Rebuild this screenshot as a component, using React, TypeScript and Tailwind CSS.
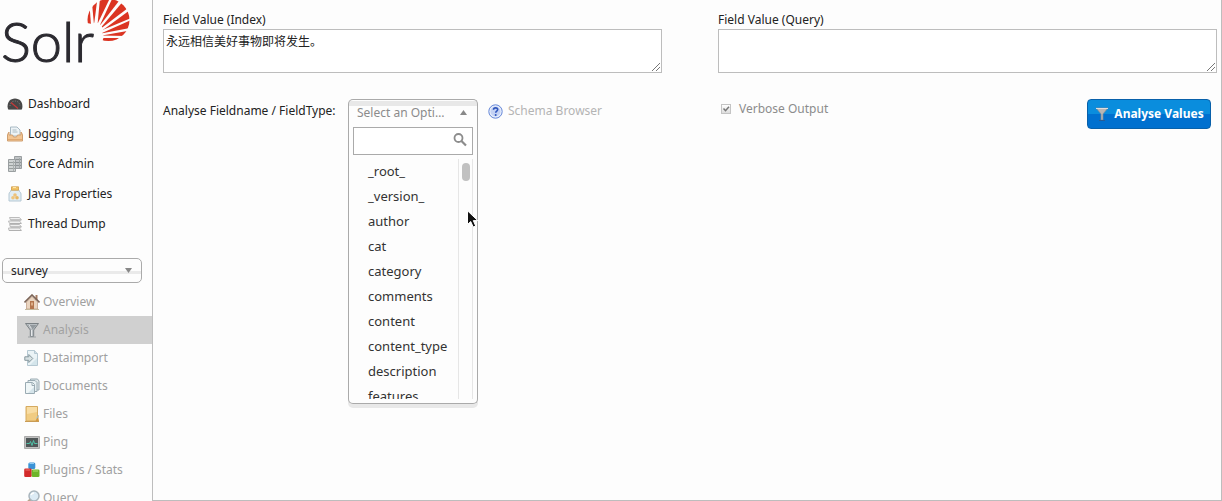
import React from "react";

type IconProps = { children: React.ReactNode };

function Icon({ children }: IconProps) {
  return (
    <svg className="size-4 shrink-0" viewBox="0 0 16 16" fill="none" aria-hidden="true">
      {children}
    </svg>
  );
}

const DashboardIcon = () => (
  <Icon>
    <path d="M1 13C-.5 8 2 2.500 8 2.500S16.500 8 15 13Q14.500 14 13 14H3Q1.500 14 1 13Z" fill="#474747" />
    <path d="M3 10a5 5 0 0 1 10 0" stroke="#8a8a8a" strokeDasharray="1 1.500" />
    <path d="M4 6.500l7 6" stroke="#c83a3a" strokeWidth="1.200" />
    <path d="M2 13.500h12" stroke="#8d8d8d" />
  </Icon>
);
const LoggingIcon = () => (
  <Icon>
    <path d="M3.500 1h6.500l3 3v6H3.500z" fill="#edf3f6" stroke="#a9bac4" />
    <path d="M5.500 4h4M5.500 6h5" stroke="#a9bac4" />
    <path d="M.5 8.500L2 6v3h3.500l1 2h3l1-2H14V6l1.500 2.500v6.500H.5z" fill="#f3c592" stroke="#cf9f70" />
    <path d="M1 13.500h14" stroke="#e0a870" />
  </Icon>
);
const CoreIcon = () => (
  <Icon>
    <path d="M7.500.5h7v12h-7z" fill="#bfc3c5" stroke="#9a9fa1" />
    <path d="M8 3.500h6M8 6.500h6M8 9.500h6" stroke="#8e9496" />
    <path d="M1.500 3.500h7v12h-7z" fill="#d0d4d4" stroke="#9a9fa1" />
    <path d="M2 6.500h6M2 9.500h6M2 12.500h6" stroke="#989e9d" />
    <path d="M6.500 5v10" stroke="#abb0b0" />
    <path d="M12.500 2v10" stroke="#a1a7a7" />
  </Icon>
);
const JavaIcon = () => (
  <Icon>
    <path d="M4 4h8c0 2 2 2 2 4v7H2V8c0-2 2-2 2-4z" fill="#e2edf3" stroke="#b5c8d4" />
    <path d="M4.500.8h7v3.400h-7z" fill="#f3c467" stroke="#cf9d48" strokeWidth=".8" />
    <path d="M6 1.500h3" stroke="#ffe7a6" />
    <circle cx="8" cy="9" r="1.800" fill="#edc27a" />
    <circle cx="6" cy="11.800" r="1.800" fill="#f0c47a" />
    <circle cx="10" cy="11.800" r="1.800" fill="#e8b662" />
  </Icon>
);
const ThreadIcon = () => (
  <Icon>
    <path d="M2.500 1.500h10l2 2.500H3.500zM1.500 5h11l2 2.500H2.500zM2.500 8.500h10l2 2.500H3.500zM1.500 12h11l2 2.500H2z" fill="#f0f0f0" stroke="#bcbcbc" />
    <path d="M3.500 4h10.500M3 7.500h11M3.500 11h10.500M2 14.500h12" stroke="#b0b0b0" />
  </Icon>
);
const HomeIcon = () => (
  <Icon>
    <path d="M2.500 8L8 2.500 13.500 8v7h-11z" fill="#ead5c0" stroke="#bc9a80" strokeWidth=".7" />
    <path d="M11.500 1h2v5h-2z" fill="#a77c62" />
    <path d="M.5 8.500L8 1l7.500 7.500" stroke="#7c6558" strokeWidth="1.600" />
    <path d="M6 7h4v8H6z" fill="#b4764d" />
    <path d="M7.200 8.500h1.600v3H7.200z" fill="#e9bf98" />
    <path d="M1 15.500h14" stroke="#c5ba9e" />
  </Icon>
);
const FunnelIcon = () => (
  <Icon>
    <path d="M1.500 1.500h13L9.700 8v6.500H6.300V8z" fill="#b8bec2" stroke="#7b8185" />
    <path d="M3.500 3h9L8.500 7.500z" fill="#92999e" />
    <path d="M7.500 8v6M5 3l2.500 3.500" stroke="#e6e8ea" />
    <path d="M4 15h8" stroke="#9ca1a4" />
  </Icon>
);
const ImportIcon = () => (
  <Icon>
    <path d="M3.500.5h7l3 3v12h-10z" fill="#eaf3f6" stroke="#b5c8d2" />
    <path d="M10.500.5v3h3" fill="#cfdee5" stroke="#b5c8d2" />
    <path d="M6 15l7-7v7z" fill="#d4e5eb" />
    <path d="M.8 6.800h4V4.500l4 4-4 4v-2.200h-4z" fill="#d7e1e3" stroke="#87989e" />
  </Icon>
);
const DocsIcon = () => (
  <Icon>
    <path d="M6.500 1h7l1.500 2v9H6.500z" fill="#dfe8ea" stroke="#9aabb3" />
    <path d="M4 2.500h7l2 2v9H4z" fill="#e7f0f2" stroke="#9aabb3" />
    <path d="M1.500 4.500h7l2 2v9h-9z" fill="#eff6f7" stroke="#9aabb3" />
    <path d="M8 5v2.500h2.500" stroke="#9aabb3" />
    <path d="M4 15l6-6v6z" fill="#d5e4ea" />
  </Icon>
);
const FolderIcon = () => (
  <Icon>
    <path d="M2 .5h11.500v12l1 2.500H2z" fill="#f1cc82" stroke="#d5aa60" />
    <path d="M3 1h10v5L3 8z" fill="#f8dda4" />
    <path d="M11.500 15l3-6v6z" fill="#d69a40" />
    <path d="M12.500 12.500l2-3" stroke="#94bfdd" />
    <path d="M1 15.500h14" stroke="#c99c55" />
  </Icon>
);
const PingIcon = () => (
  <Icon>
    <path d="M.5 2.500h15v12H.5z" fill="#c0c0c0" stroke="#aaa" />
    <path d="M2 4h12v9H2z" fill="#505758" />
    <path d="M2.500 9.500h3l1-2 1.500 4 1.500-5 1 3h3" stroke="#51c4aa" />
  </Icon>
);
const PluginsIcon = () => (
  <Icon>
    <rect x="4.300" y=".5" width="7" height="6.500" rx="1.500" fill="#3b93d6" />
    <path d="M5.500 1.500h4.500" stroke="#90cbf2" />
    <rect x=".2" y="6.500" width="7.500" height="8.500" rx="1.300" fill="#d32b2b" />
    <path d="M1.500 8h4.500" stroke="#ef7770" />
    <rect x="7.700" y="7.500" width="7.800" height="7.500" rx="1.300" fill="#6eb52b" />
    <path d="M9 9h5" stroke="#b1df6c" />
  </Icon>
);
const QueryIcon = () => (
  <Icon>
    <path d="M6.500 9.500L2 14" stroke="#b9a48d" strokeWidth="2.500" />
    <circle cx="10" cy="6" r="5" fill="#dcebf5" stroke="#a9b5bd" strokeWidth="1.500" />
    <path d="M7 5a3 3 0 0 1 3-2" stroke="#fff" strokeWidth="1.500" />
  </Icon>
);

const mainLinks = [
  { label: "Dashboard", icon: <DashboardIcon /> },
  { label: "Logging", icon: <LoggingIcon /> },
  { label: "Core Admin", icon: <CoreIcon /> },
  { label: "Java Properties", icon: <JavaIcon /> },
  { label: "Thread Dump", icon: <ThreadIcon /> },
];

const coreLinks = [
  { label: "Overview", icon: <HomeIcon /> },
  { label: "Analysis", icon: <FunnelIcon />, active: true },
  { label: "Dataimport", icon: <ImportIcon /> },
  { label: "Documents", icon: <DocsIcon /> },
  { label: "Files", icon: <FolderIcon /> },
  { label: "Ping", icon: <PingIcon /> },
  { label: "Plugins / Stats", icon: <PluginsIcon /> },
  { label: "Query", icon: <QueryIcon /> },
];

const fields = [
  "_root_",
  "_version_",
  "author",
  "cat",
  "category",
  "comments",
  "content",
  "content_type",
  "description",
  "features",
];

function Logo() {
  return (
    <a href="#" className="relative block h-[89px] shrink-0 text-[#2b2a30]">
      <svg className="absolute top-0 left-[87px] h-[42px] w-[43px]" viewBox="0 0 43 42" aria-hidden="true">
        <circle cx="21.500" cy="20" r="21" fill="#db3422" />
        <g fill="#fdfdfd">
          <path d="M0 23L5 24 9 22 14 25 16 29 15 33 17 36.500 15 42H0z" />
          <path d="M4 25L2.500 5 5 3 7 25z" />
          <path d="M7 25L10.500-2H13L10.500 25z" />
          <path d="M9.500 26L23-2H25.500L12.500 26z" />
          <path d="M11 28L33.500-1 35.500 2 13.500 28z" />
          <path d="M12 30L41 8 43 10 14.500 31z" />
          <path d="M13 31L43 18.500V20.500L15 33z" />
          <path d="M14 33.500L43 28V30.500L15 35.500z" />
          <path d="M14 35.500L39 36 37 38 15 38z" />
        </g>
      </svg>
      <span className="relative block pt-1.5 pl-px font-['Lato'] text-[56px] leading-[70px] font-light [-webkit-text-stroke:1px_#2b2a30]">
        Solr
      </span>
    </a>
  );
}

function FieldBox({ id, label, value }: { id: string; label: string; value: string }) {
  return (
    <div>
      <label htmlFor={id} className="block h-[17px] leading-4">
        {label}
      </label>
      <div className="relative">
        <textarea
          id={id}
          defaultValue={value}
          className="block h-11 w-full resize-none border border-[#bdbdbd] bg-white px-0.5 py-1 leading-4 outline-none"
        />
        <svg className="pointer-events-none absolute right-0.5 bottom-0.5 size-2" viewBox="0 0 8 8" aria-hidden="true">
          <path d="M0 8L8 0M4 8l4-4" stroke="#777" />
        </svg>
      </div>
    </div>
  );
}

function FieldPicker() {
  return (
    <div className="relative w-[130px]">
      <button
        type="button"
        id="field"
        aria-haspopup="listbox"
        aria-expanded="true"
        className="flex h-[26px] w-full items-center justify-between rounded-t-[5px] border border-b-0 border-[#aaa] bg-[linear-gradient(#fdfdfd_1px,#e8e8e8_1px,#e8e8e8_6px,#fdfdfd_6px)] pr-2.5 pl-2 text-[#8b8b8b]"
      >
        <span className="truncate">Select an Opti…</span>
        <svg className="h-[5px] w-[7px] shrink-0" viewBox="0 0 7 5" aria-hidden="true">
          <path d="M3.500 0L7 5H0z" fill="#888" />
        </svg>
      </button>
      <div className="absolute top-[26px] left-0 z-10 w-full rounded-b-[5px] border border-t-0 border-[#aaa] bg-[#fdfdfd] px-1 pt-0.5 pb-1 shadow-[0_4px_0_#e8e8e8]">
        <div className="relative">
          <input
            type="text"
            aria-label="Search fields"
            className="block h-7 w-full border border-[#aaa] bg-white pr-5 pl-1 outline-none"
          />
          <svg className="pointer-events-none absolute top-1.5 right-1.5 size-3.5" viewBox="0 0 14 14" fill="none" aria-hidden="true">
            <circle cx="5.500" cy="5" r="4" stroke="#8c8c8c" strokeWidth="1.800" />
            <path d="M8.500 8l4.500 4.500" stroke="#8c8c8c" strokeWidth="2.200" />
          </svg>
        </div>
        <div className="mt-1 flex h-60 overflow-hidden">
          <ul role="listbox" aria-label="Fields" className="flex-1 text-[13px] text-[#333]">
            {fields.map((f) => (
              <li key={f} role="option" aria-selected="false" className="h-[25px] pl-[15px] leading-6">
                {f}
              </li>
            ))}
          </ul>
          <div className="w-[15px] shrink-0 border-x border-[#e6e6e6] px-[3px] pt-1">
            <div className="h-[18px] w-2 rounded-full bg-[#c1c1c1]" />
          </div>
        </div>
      </div>
      <svg className="absolute top-[111px] left-[119px] z-20 h-[18px] w-3" viewBox="0 0 12 18" aria-hidden="true">
        <path d="M.5.800v13.700l3.200-3 2.500 5.500 2.500-1-2.400-5.400h4.500z" fill="#111" stroke="#fff" />
      </svg>
    </div>
  );
}

export default function App() {
  return (
    <div className="flex h-screen overflow-hidden bg-[#fdfdfd] font-['Noto_Sans','Noto_Sans_CJK_SC',sans-serif] text-[12px] text-[#222]">
      <aside className="flex w-[152px] shrink-0 flex-col">
        <Logo />
        <nav aria-label="Main">
          <ul>
            {mainLinks.map((l) => (
              <li key={l.label}>
                <a href="#" className="flex h-[30px] items-center gap-[5px] pl-[7px]">
                  {l.icon}
                  {l.label}
                </a>
              </li>
            ))}
          </ul>
        </nav>
        <div className="relative mt-[19px] mr-2.5 ml-0.5">
          <select
            aria-label="Core"
            className="block h-[25px] w-full appearance-none rounded-[5px] border border-[#aaa] bg-[linear-gradient(transparent_12px,#eaeaea_12px,#eaeaea_15px,transparent_15px)] px-2 outline-none"
          >
            <option>survey</option>
          </select>
          <svg className="pointer-events-none absolute top-2.5 right-2.5 h-[5px] w-[7px]" viewBox="0 0 7 5" aria-hidden="true">
            <path d="M0 0h7L3.500 5z" fill="#888" />
          </svg>
        </div>
        <nav aria-label="Core" className="mt-[5px] ml-[17px]">
          <ul>
            {coreLinks.map((l) => (
              <li key={l.label}>
                <a
                  href="#"
                  className={
                    l.active
                      ? "flex h-7 items-center gap-[3px] bg-[#d0d0d0] pl-[7px] text-[#a2a2a2]"
                      : "flex h-7 items-center gap-[3px] pl-[7px] text-[#a0a0a0]"
                  }
                >
                  {l.icon}
                  {l.label}
                </a>
              </li>
            ))}
          </ul>
        </nav>
      </aside>

      <main className="min-w-0 flex-1 border-r border-b border-l border-[#bdbdbd] pt-3 pr-1 pl-2.5">
        <form className="grid grid-cols-2 gap-x-14 gap-y-[26px]" onSubmit={(e) => e.preventDefault()}>
          <FieldBox id="index" label="Field Value (Index)" value="永远相信美好事物即将发生。" />
          <FieldBox id="query" label="Field Value (Query)" value="" />
          <div className="flex items-start whitespace-nowrap">
            <label htmlFor="field" className="w-[185px] shrink-0 leading-6">
              Analyse Fieldname / FieldType:
            </label>
            <FieldPicker />
            <a href="#" className="ml-2.5 flex h-6 items-center gap-[5px] text-[#b4b4b4]">
              <svg className="size-[15px]" viewBox="0 0 15 15" fill="none" aria-hidden="true">
                <circle cx="7.500" cy="7.500" r="6.700" fill="#e9effb" stroke="#6486d8" />
                <circle cx="7.500" cy="7.500" r="5" fill="#c4d2f4" />
                <path d="M5.500 5.800c0-2.700 4.200-2.500 4.200-.2 0 1.500-2 1.500-2 3.200" stroke="#3157bd" strokeWidth="1.600" />
                <circle cx="7.700" cy="11" r="1" fill="#3157bd" />
              </svg>
              Schema Browser
            </a>
          </div>
          <div className="flex items-start justify-between pr-1.5 pl-[3px]">
            <label className="flex h-5 items-center gap-2 text-[#8c8c8c]">
              <span className="relative block size-2.5">
                <input
                  type="checkbox"
                  defaultChecked
                  className="block size-2.5 appearance-none border border-[#c4c4c4] bg-linear-to-b from-white to-[#ddd]"
                />
                <svg className="pointer-events-none absolute top-0 left-0 size-2.5" viewBox="0 0 10 10" fill="none" aria-hidden="true">
                  <path d="M2.500 4.500l2 2.200 3.500-4" stroke="#777" strokeWidth="1.500" />
                </svg>
              </span>
              Verbose Output
            </label>
            <button
              type="submit"
              className="flex h-[30px] w-[124px] items-center justify-center gap-1 rounded-[4px] border border-[#0860aa] bg-[linear-gradient(#0a8ddd_50%,#0070cf_50%)] font-bold whitespace-nowrap text-white"
            >
              <svg className="size-4 shrink-0" viewBox="0 0 16 16" fill="none" aria-hidden="true">
                <path d="M2 2h12L9 8v6H7V8z" fill="#b9b6b4" stroke="#77899a" strokeWidth=".7" />
                <path d="M2 2.500h12" stroke="#ddd" />
                <path d="M5 14.500h6" stroke="#285b94" />
              </svg>
              Analyse Values
            </button>
          </div>
        </form>
      </main>
    </div>
  );
}
